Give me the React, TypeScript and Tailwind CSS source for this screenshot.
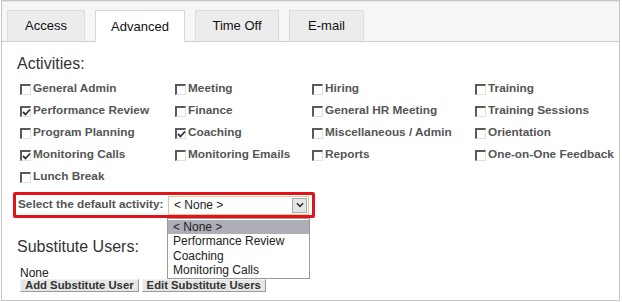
import React from 'react'

type Item = { label: string; checked?: boolean }

const columns: Item[][] = [
  [
    { label: 'General Admin' },
    { label: 'Performance Review', checked: true },
    { label: 'Program Planning' },
    { label: 'Monitoring Calls', checked: true },
    { label: 'Lunch Break' },
  ],
  [
    { label: 'Meeting' },
    { label: 'Finance' },
    { label: 'Coaching', checked: true },
    { label: 'Monitoring Emails' },
  ],
  [
    { label: 'Hiring' },
    { label: 'General HR Meeting' },
    { label: 'Miscellaneous / Admin' },
    { label: 'Reports' },
  ],
  [
    { label: 'Training' },
    { label: 'Training Sessions' },
    { label: 'Orientation' },
    { label: 'One-on-One Feedback' },
  ],
]

const colWidths = ['w-[155px]', 'w-[137px]', 'w-[163px]', 'w-[130px]']

function Checkbox({ checked }: { checked?: boolean }) {
  return (
    <span className="relative w-[11px] h-[11px] shrink-0 bg-white border-t-2 border-l-2 border-t-[#5a5a5a] border-l-[#5a5a5a] border-r border-b border-r-[#e0e0e0] border-b-[#e0e0e0]">
      {checked && (
        <svg viewBox="0 0 9 9" className="absolute left-0 top-0 w-[9px] h-[9px]">
          <path d="M1 4 L3.5 6.5 L8 1.5" fill="none" stroke="#333" strokeWidth="1.8" />
        </svg>
      )}
    </span>
  )
}

const tabs = [
  { label: 'Access', w: 'w-[78px]' },
  { label: 'Advanced', w: 'w-[90px]', active: true },
  { label: 'Time Off', w: 'w-[84px]' },
  { label: 'E-mail', w: 'w-[75px]' },
]

export default function App() {
  return (
    <div className="w-[622px] h-[302px] bg-white font-['Liberation_Sans',Arial,sans-serif]">
      <div className="ml-px w-[619px] h-[301px] border border-[#c6c6c6] flex flex-col">
        {/* tab strip */}
        <div className="h-[41px] bg-[#f6f6f6] border-t border-[#e4e4e4] border-b border-b-[#cfcfcf] flex items-end gap-[10px] pl-[5px]">
          {tabs.map((t) => (
            <div
              key={t.label}
              className={
                t.active
                  ? `${t.w} h-[32px] -mb-px bg-white border border-b-0 border-[#d6d6d6] flex items-center justify-center text-[13px] text-[#111]`
                  : `${t.w} h-[31px] bg-[#ececec] border border-b-0 border-[#dcdcdc] flex items-center justify-center text-[13px] text-[#111]`
              }
            >
              {t.label}
            </div>
          ))}
        </div>

        {/* content */}
        <div className="relative flex-1 pl-[15px] pt-[12px]">
          <div className="text-[16px] leading-[20px] text-[#333]">Activities:</div>

          <div className="flex mt-[4px] pl-[3px]">
            {columns.map((col, ci) => (
              <div key={ci} className={`${colWidths[ci]} flex flex-col`}>
                {col.map((it) => (
                  <div key={it.label} className="h-[22px] flex items-center gap-[2px]">
                    <Checkbox checked={it.checked} />
                    <span className="text-[11.8px] font-bold text-[#555] whitespace-nowrap">{it.label}</span>
                  </div>
                ))}
              </div>
            ))}
          </div>

          {/* default activity select */}
          <div className="relative mt-[4px] -ml-[4px] w-[302px] h-[26px] border-[3px] border-[#e0141a] rounded-[2px] flex items-center pl-[2px]">
            <span className="text-[11.8px] font-bold text-[#555] whitespace-nowrap">Select the default activity:</span>
            <div className="ml-auto mr-[3px] w-[141px] h-[19px] border border-[#d9c89a] bg-white flex items-center">
              <span className="pl-[5px] text-[12px] text-[#222] flex-1">&lt; None &gt;</span>
              <span className="w-[15px] h-[15px] mr-px bg-[#e6e6e6] border border-[#a9a9a9] flex items-center justify-center">
                <svg viewBox="0 0 9 6" className="w-[8px] h-[6px]">
                  <path d="M1 1 L4.5 4.5 L8 1" fill="none" stroke="#333" strokeWidth="1.8" />
                </svg>
              </span>
            </div>
            <div className="absolute left-[151px] top-[23px] w-[143px] bg-white border border-[#9a9a9a] pt-[1px] flex flex-col z-10">
              <div className="h-[14px] leading-[14px] pl-[5px] text-[12px] text-[#222] bg-[#aeaeb7]">&lt; None &gt;</div>
              <div className="h-[15px] leading-[15px] pl-[5px] text-[12px] text-[#222]">Performance Review</div>
              <div className="h-[14px] leading-[14px] pl-[5px] text-[12px] text-[#222]">Coaching</div>
              <div className="h-[15px] leading-[15px] pl-[5px] text-[12px] text-[#222]">Monitoring Calls</div>
            </div>
          </div>

          <div className="mt-[19px] text-[16px] leading-[20px] text-[#333]">Substitute Users:</div>
          <div className="mt-[9px] pl-[3px] text-[12px] leading-[14px] text-[#222]">None</div>
          <div className="-mt-[1px] pl-[3px] flex gap-[3px]">
            <button className="h-[13px] px-[4px] bg-[#e6e6e6] border border-t-[#f2f2f2] border-l-[#f2f2f2] border-r-[#999] border-b-[#999] text-[11.3px] leading-[11px] font-bold text-[#333]">
              Add Substitute User
            </button>
            <button className="h-[13px] px-[4px] bg-[#e6e6e6] border border-t-[#f2f2f2] border-l-[#f2f2f2] border-r-[#999] border-b-[#999] text-[11.3px] leading-[11px] font-bold text-[#333]">
              Edit Substitute Users
            </button>
          </div>
        </div>
      </div>
    </div>
  )
}
